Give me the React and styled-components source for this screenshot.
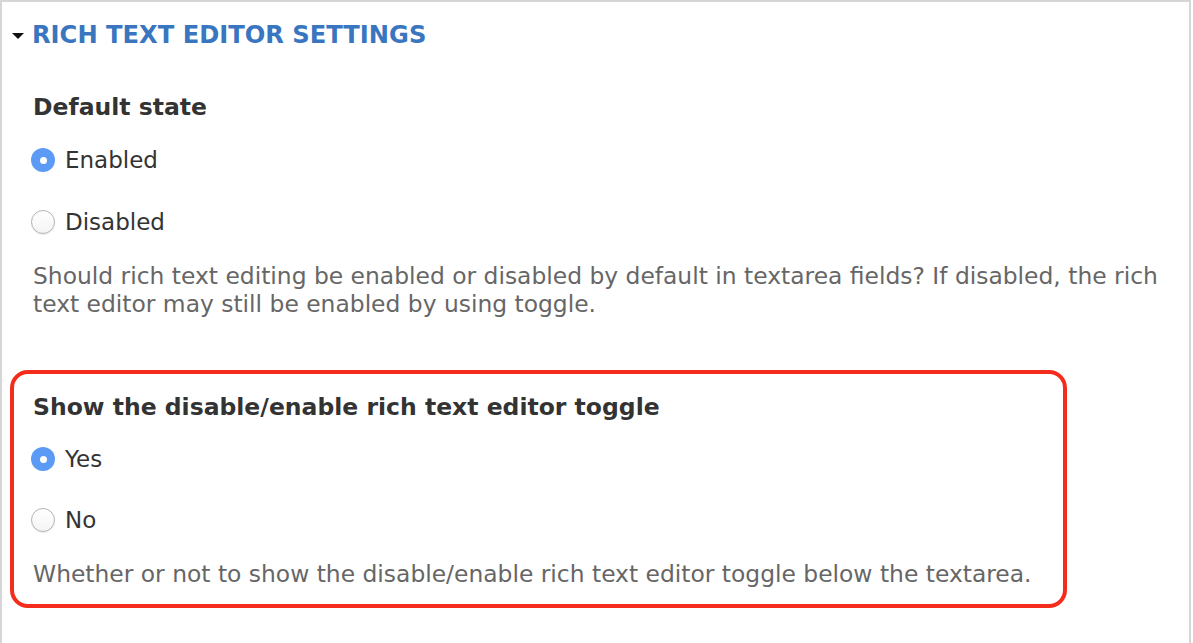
import React from "react";
import styled, { createGlobalStyle } from "styled-components";

const Global = createGlobalStyle`
  html, body { margin: 0; padding: 0; background: #ffffff; }
  body { font-family: "DejaVu Sans", "Liberation Sans", sans-serif; color: #333; }
  * { box-sizing: border-box; }
`;

const Frame = styled.div`
  width: 1191px;
  height: 643px;
  border-top: 2px solid #d6d6d6;
  border-left: 2px solid #d6d6d6;
  border-right: 2px solid #d6d6d6;
  background: #fff;
  overflow: hidden;
`;

const Summary = styled.div`
  display: flex;
  align-items: center;
  gap: 8px;
  padding: 18px 0 0 10px;
  height: 48px;
`;

const Caret = styled.span`
  width: 0;
  height: 0;
  border-left: 6.5px solid transparent;
  border-right: 6.5px solid transparent;
  border-top: 6px solid #111;
  margin-top: 2px;
`;

const SummaryTitle = styled.span`
  font-size: 24.2px;
  line-height: 30px;
  font-weight: bold;
  color: #3a76bf;
`;

const Body = styled.div`
  display: flex;
  flex-direction: column;
  padding: 0 0 0 31px;
`;

const GroupTitle = styled.div`
  font-size: 23.5px;
  line-height: 30px;
  font-weight: bold;
  color: #333;
  margin-top: ${(p) => p.$top}px;
`;

const RadioRow = styled.label`
  display: flex;
  align-items: center;
  height: 30px;
  gap: 10px;
  margin-top: ${(p) => p.$top}px;
  margin-left: -2px;
  font-size: 23px;
  color: #333;
`;

const RadioDot = styled.span`
  width: 24px;
  height: 24px;
  border-radius: 50%;
  flex: none;
  display: flex;
  align-items: center;
  justify-content: center;
  background: ${(p) => (p.$on ? "#5b9bf6" : "linear-gradient(#ffffff, #f4f4f4)")};
  border: ${(p) => (p.$on ? "none" : "1px solid #b3b3b3")};
  box-shadow: ${(p) => (p.$on ? "none" : "0 1px 1px rgba(0,0,0,0.08)")};
  &::after {
    content: "";
    display: ${(p) => (p.$on ? "block" : "none")};
    width: 7px;
    height: 7px;
    border-radius: 50%;
    background: #fff;
  }
`;

const Description = styled.div`
  font-size: 23.4px;
  line-height: 28px;
  color: #666;
  margin-top: ${(p) => p.$top}px;
  max-width: 1140px;
`;

const Highlight = styled.div`
  margin: 52px 0 0 -23px;
  width: 1057px;
  border: 4px solid #f42c1c;
  border-radius: 18px;
  padding: 18px 0 16px 19px;
  display: flex;
  flex-direction: column;
`;

function Radio({ on, label, top }) {
  return (
    <RadioRow $top={top}>
      <RadioDot $on={on} />
      <span>{label}</span>
    </RadioRow>
  );
}

export default function App() {
  return (
    <>
      <Global />
      <Frame>
        <Summary>
          <Caret />
          <SummaryTitle>RICH TEXT EDITOR SETTINGS</SummaryTitle>
        </Summary>
        <Body>
          <GroupTitle $top={42}>Default state</GroupTitle>
          <Radio on label="Enabled" top={23} />
          <Radio label="Disabled" top={32} />
          <Description $top={25}>
            Should rich text editing be enabled or disabled by default in textarea fields? If disabled, the rich text editor may still be enabled by using toggle.
          </Description>
          <Highlight>
            <GroupTitle $top={0}>Show the disable/enable rich text editor toggle</GroupTitle>
            <Radio on label="Yes" top={22} />
            <Radio label="No" top={31} />
            <Description $top={25}>
              Whether or not to show the disable/enable rich text editor toggle below the textarea.
            </Description>
          </Highlight>
        </Body>
      </Frame>
    </>
  );
}
